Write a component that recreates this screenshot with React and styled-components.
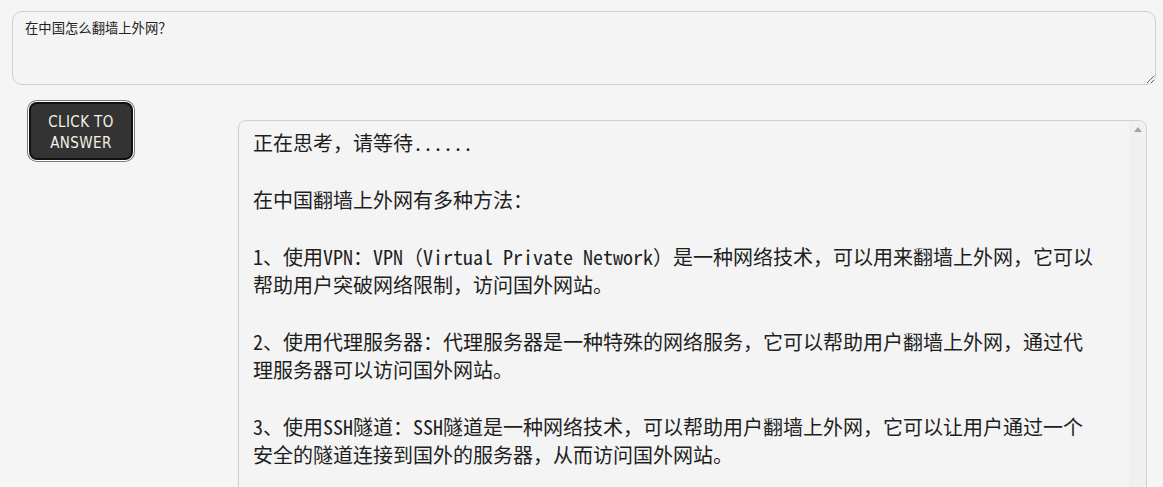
import React from "react";
import styled, { createGlobalStyle } from "styled-components";

const Global = createGlobalStyle`
  html, body { margin: 0; padding: 0; background: #f5f5f5; }
  body { font-family: "Noto Sans CJK SC", "Liberation Sans", sans-serif; }
`;

const Page = styled.div`
  padding: 11px 7px 0 12px;
`;

const Question = styled.textarea`
  display: block;
  box-sizing: border-box;
  width: 100%;
  height: 74px;
  margin: 0;
  padding: 7px 12px;
  border: 1px solid #cfcfcf;
  border-radius: 10px;
  background: #f4f4f4;
  color: #222;
  font-family: "Noto Sans CJK SC", "Liberation Sans", sans-serif;
  font-size: 13.33px;
  line-height: 18px;
  resize: vertical;
  outline: none;
`;

const Row = styled.div`
  display: grid;
  grid-template-columns: 226px 909px;
  align-items: start;
  margin-top: 17px;
`;

const AnswerButton = styled.button`
  justify-self: start;
  box-sizing: border-box;
  width: 104px;
  height: 58px;
  margin-left: 17px;
  padding: 4px 0 0;
  border: 2px solid #111;
  border-radius: 8px;
  box-shadow: 0 0 0 1px #fff, 0 0 0 2px #7a7a7a;
  background: #333;
  color: #f4f1e6;
  font-family: "Liberation Sans Narrow", "Arial Narrow", "DejaVu Sans Condensed", sans-serif;
  font-size: 15px;
  line-height: 21px;
  letter-spacing: 0.4px;
  text-transform: uppercase;
  cursor: pointer;
`;

const AnswerPanel = styled.div`
  display: flex;
  box-sizing: border-box;
  width: 909px;
  height: 420px;
  margin-top: 18px;
  border: 1px solid #cfcfcf;
  border-radius: 8px;
  background: #f4f4f4;
  overflow: hidden;
`;

const AnswerText = styled.textarea`
  flex: 1;
  min-width: 0;
  box-sizing: border-box;
  margin: 0;
  padding: 8px 30px 8px 14px;
  border: none;
  background: transparent;
  color: #1e1e1e;
  font-family: "Noto Sans Mono CJK SC", "Liberation Mono", "Noto Sans CJK SC", monospace;
  font-size: 20px;
  line-height: 28.4px;
  resize: none;
  outline: none;
  overflow: hidden;
`;

const ScrollTrack = styled.div`
  flex: 0 0 17px;
  display: flex;
  justify-content: center;
  background: #f0f0f0;
`;

const ScrollArrow = styled.span`
  width: 0;
  height: 0;
  margin-top: 6px;
  border-left: 4.5px solid transparent;
  border-right: 4.5px solid transparent;
  border-bottom: 5px solid #a3a3a3;
`;

const answerText = `正在思考，请等待......

在中国翻墙上外网有多种方法：

1、使用VPN：VPN（Virtual Private Network）是一种网络技术，可以用来翻墙上外网，它可以帮助用户突破网络限制，访问国外网站。

2、使用代理服务器：代理服务器是一种特殊的网络服务，它可以帮助用户翻墙上外网，通过代理服务器可以访问国外网站。

3、使用SSH隧道：SSH隧道是一种网络技术，可以帮助用户翻墙上外网，它可以让用户通过一个安全的隧道连接到国外的服务器，从而访问国外网站。`;

export default function App() {
  return (
    <Page>
      <Global />
      <Question defaultValue="在中国怎么翻墙上外网？" />
      <Row>
        <AnswerButton>
          Click to
          <br />
          Answer
        </AnswerButton>
        <AnswerPanel>
          <AnswerText readOnly value={answerText} />
          <ScrollTrack>
            <ScrollArrow />
          </ScrollTrack>
        </AnswerPanel>
      </Row>
    </Page>
  );
}
